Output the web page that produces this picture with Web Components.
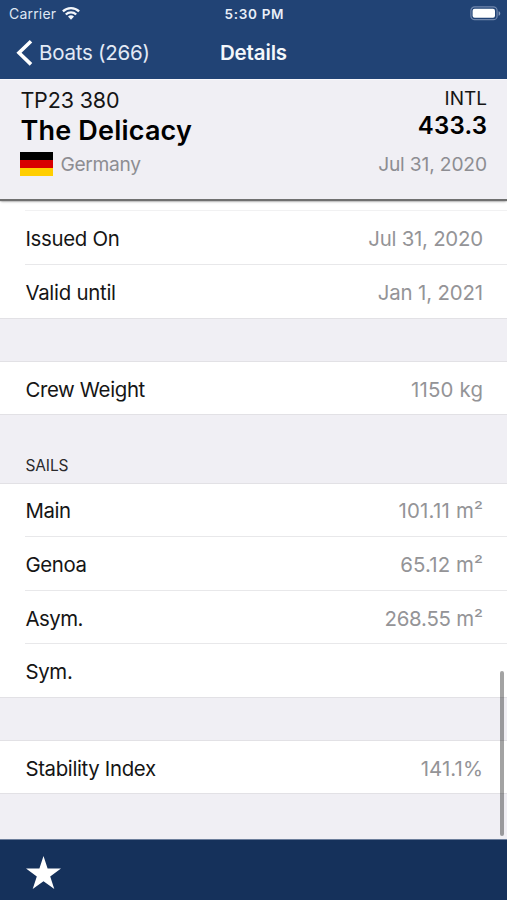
<!DOCTYPE html>
<html lang="en">
<head>
<meta charset="utf-8">
<title>Boat details</title>
<style>
html,body{margin:0;height:100%;background:#f0eff4}
body{font-family:Inter,"Liberation Sans",sans-serif;overflow:hidden}
</style>
</head>
<body>
<boat-app></boat-app>
<script>
function define(name, html, after) {
  customElements.define(name, class extends HTMLElement {
    connectedCallback() {
      if (this.shadowRoot) return;
      const t = document.createElement('template');
      t.innerHTML = html;
      this.attachShadow({ mode: 'open' }).append(t.content.cloneNode(true));
      if (after) after(this);
    }
  });
}

// Text with its own tracking; the trailing letter gap is cancelled at the end.
define('t-label', `<style>:host{display:block;white-space:pre;line-height:1.2}span{display:block}</style><span><slot></slot></span>`, el => {
  const ls = el.getAttribute('track') || '0';
  el.style.letterSpacing = ls + 'px';
  el.shadowRoot.querySelector('span').style.marginRight = -ls + 'px';
});

define('status-bar', `<style>
:host{display:grid;grid-template-columns:1fr auto 1fr;align-items:center;height:28px;padding:0 6px 0 9px;color:#dfe7f3;font-size:14px;box-sizing:border-box}
.l{display:flex;align-items:center;gap:6px}
.c{font-weight:600;font-size:13.5px;color:#e9eff8;margin-right:2px}
.r{justify-self:end;display:flex}
svg{display:block}
.l svg{margin-top:-2px}
.r svg{margin-top:-1px}
</style>
<div class="l"><t-label track="0.2">Carrier</t-label>
<svg width="18" height="14" viewBox="0 0 18 14" fill="none" stroke="#f4f7fb" stroke-width="2.3"><path d="M.9 5.4a11.6 11.6 0 0 1 16.2 0"/><path d="M3.8 8.5a7.4 7.4 0 0 1 10.4 0"/><path d="M9 13.8l-3-3.2a4.3 4.3 0 0 1 6 0z" fill="#f4f7fb" stroke="none"/></svg></div>
<t-label class="c" track="0.7">5:30 PM</t-label>
<div class="r"><svg width="31" height="15" viewBox="0 0 31 15"><rect x=".9" y=".9" width="26.2" height="12.8" rx="3.8" fill="none" stroke="#7187ad" stroke-width="1.2"/><rect x="2.6" y="2.8" width="22.4" height="9" rx="2" fill="#fff"/><path d="M28.6 5.2c2.2.7 2.2 3.8 0 4.5z" fill="#8b9ebd"/></svg></div>`);

define('nav-bar', `<style>
:host{display:grid;grid-template-columns:1fr auto 1fr;align-items:center;height:50px;padding:0 16px;color:#e3eaf5;font-size:20.5px;box-sizing:border-box}
.b{display:flex;align-items:center;gap:6px}
svg{display:block}
b{font-weight:600;color:#f4f7fb}
</style>
<div class="b"><svg width="17" height="28" viewBox="0 0 17 28" fill="none" stroke="#fff" stroke-width="3.6"><path d="M15 2.3L3 13.7 15 25.4"/></svg><t-label track="-0.25"><slot name="back"></slot></t-label></div>
<b><t-label track="-0.13"><slot></slot></t-label></b><i></i>`);

define('flag-de', `<style>:host{display:grid;grid-template-rows:repeat(3,1fr);width:33px;height:24px}i:nth-of-type(1){background:#000}i:nth-of-type(2){background:#d80000}i:nth-of-type(3){background:#ffce00}</style><i></i><i></i><i></i>`);

define('boat-header', `<style>
:host{display:flex;justify-content:space-between;height:120px;box-sizing:border-box;padding:0 20px 0 20.4px;background:#f0eff4;color:#151515;border-top:1px solid #f8f7fb;position:relative;z-index:1;box-shadow:0 2px 1px #707070,0 4px 2px -1px #9999}
.l,.r{display:flex;flex-direction:column}
.r{align-items:flex-end}
.g{color:#8d8d92;font-size:19.2px;line-height:24px}
.cn{display:flex;align-items:flex-start;gap:7px}
</style>
<div class="l">
<t-label track="-0.16" style="font-size:21.5px;line-height:26px;padding-top:7px">TP23 380</t-label>
<t-label track="0.2" style="font-size:27px;font-weight:600;line-height:34px;color:#000;padding:1px 0 4px">The Delicacy</t-label>
<div class="cn"><flag-de></flag-de><t-label class="g" track="-0.3">Germany</t-label></div>
</div>
<div class="r">
<t-label track="0" style="font-size:19px;line-height:24px;padding-top:7px">INTL</t-label>
<t-label track="0.2" style="font-size:24px;font-weight:600;line-height:30px;color:#000;padding-bottom:11px">433.3</t-label>
<t-label class="g" track="-0.15">Jul 31, 2020</t-label>
</div>`);

define('list-group', `<style>:host{display:block;background:#fff;border-top:1px solid #e2e1e5;border-bottom:1px solid #e2e1e5;box-sizing:border-box}</style><slot></slot>`);

define('list-row', `<style>
:host{display:flex;justify-content:space-between;align-items:center;box-sizing:border-box;height:var(--h,53px);margin-left:25px;padding:var(--drop,3px) 24px 0 .4px;font-size:20.4px;color:#151515}
:host(:not(:last-child)){border-bottom:1px solid #e8e8ea}
.v{color:#949497}
</style><t-label class="k"></t-label><t-label class="v"></t-label>`, el => {
  for (const [c, a, t] of [['.k', 'name', 'kt'], ['.v', 'value', 'vt']]) {
    const n = el.shadowRoot.querySelector(c), ls = +(el.getAttribute(t) || 0) - 0.2;
    n.textContent = el.getAttribute(a) || '';
    n.style.letterSpacing = ls + 'px';
    n.style.marginRight = -ls + 'px';
  }
});

define('section-title', `<style>:host{display:flex;align-items:flex-end;height:68px;padding:0 0 7px 25.4px;box-sizing:border-box;font-size:15.5px;color:#2a2a2c}</style><t-label track="-0.1"><slot></slot></t-label>`);

define('tool-bar', `<style>:host{display:flex;align-items:center;height:61px;box-sizing:border-box;border-top:1px solid #6c7e9b;background:#15315b;padding:5px 0 0 26px}svg{display:block}</style>
<svg width="35" height="34" viewBox="0 0 35 34"><path fill="#fff" d="M17.5 0l4.1 12.6H35L24.2 20.4 28.3 33 17.5 25.2 6.7 33l4.1-12.6L0 12.6h13.4z"/></svg>`);

define('boat-app', `<style>
:host{display:flex;flex-direction:column;height:900px;width:507px;background:#f0eff4}
.top{background:#214375;height:79px;flex:none}
main{flex:1;min-height:0;position:relative;padding-top:11px;background:linear-gradient(#fff 11px,#f0eff4 0);box-sizing:border-box}
.gap{height:42px}
.thumb{position:absolute;right:3px;top:472px;width:4px;height:165px;border-radius:2px;background:#0000005c}
.first{border-top:0}
.edge{height:1px;margin-left:25px;background:#f1f1f2}
.lead{background:#fff}
</style>
<div class="top"><status-bar></status-bar><nav-bar><span slot="back">Boats (266)</span>Details</nav-bar></div>
<boat-header></boat-header>
<main>
<div class="lead"><div class="edge"></div></div>
<list-group class="first">
<list-row style="--h:54px" name="Issued On" kt="-0.1" value="Jul 31, 2020" vt="-0.05"></list-row>
<list-row name="Valid until" kt="-0.06" value="Jan 1, 2021" vt="0.04"></list-row>
</list-group>
<div class="gap"></div>
<list-group><list-row style="--h:52px;--drop:5px" name="Crew Weight" kt="-0.14" value="1150 kg" vt="0.4"></list-row></list-group>
<section-title>SAILS</section-title>
<list-group>
<list-row style="--drop:3px" name="Main" kt="-0.2" value="101.11 m²" vt="0.42"></list-row>
<list-row style="--h:54px" name="Genoa" kt="-0.15" value="65.12 m²" vt="0.3"></list-row>
<list-row style="--drop:5px" name="Asym." kt="-0.3" value="268.55 m²" vt="0"></list-row>
<list-row name="Sym." kt="-0.1"></list-row>
</list-group>
<div class="gap"></div>
<list-group><list-row style="--h:52px;--drop:5px" name="Stability Index" kt="-0.14" value="141.1%" vt="0.3"></list-row></list-group>
<div class="thumb"></div>
</main>
<tool-bar></tool-bar>`);
</script>
</body>
</html>
